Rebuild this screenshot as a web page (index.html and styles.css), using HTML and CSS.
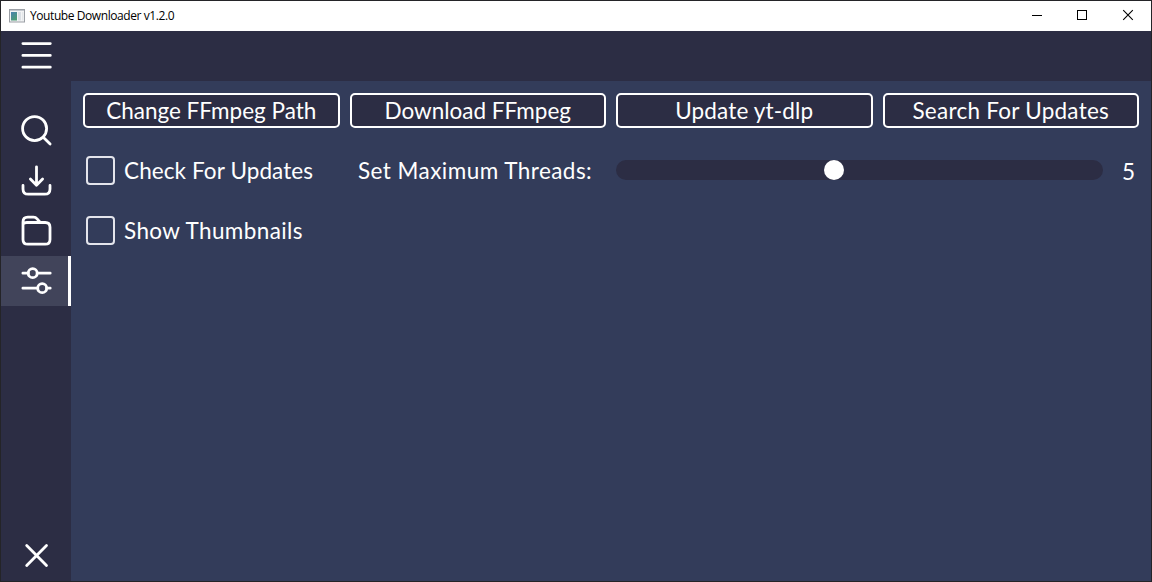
FILE: index.html
```html
<!DOCTYPE html>
<html lang="en">
<head>
<meta charset="utf-8">
<title>Youtube Downloader v1.2.0</title>
<link rel="stylesheet" href="styles.css">
</head>
<body>
<div class="window">
  <header class="titlebar">
    <svg class="app-icon" width="16" height="14" viewBox="0 0 16 14">
      <defs><linearGradient id="g" x1="0" y1="0" x2="0.6" y2="1"><stop offset="0" stop-color="#4a82b0"/><stop offset="1" stop-color="#4d9c74"/></linearGradient></defs>
      <rect x="0.5" y="0.5" width="15" height="12.5" fill="#f3f4f5" stroke="#9b9fa5"/>
      <path d="M1 1.5h14" stroke="#c3c8ce"/>
      <rect x="2" y="3" width="6" height="8.5" fill="url(#g)"/>
      <rect x="9" y="3" width="3" height="8.5" fill="#dadfe4"/>
      <rect x="13" y="3" width="1.5" height="8.5" fill="#e4e7ea"/>
    </svg>
    <span class="title">Youtube Downloader v1.2.0</span>
    <div class="controls">
      <svg width="46" height="30" viewBox="0 0 46 30"><path d="M19 14.5h10" stroke="#000"/></svg>
      <svg width="46" height="30" viewBox="0 0 46 30"><rect x="18.5" y="9.5" width="9" height="9" fill="none" stroke="#000"/></svg>
      <svg width="46" height="30" viewBox="0 0 46 30"><path d="M18.2 9.2l9.6 9.6M27.8 9.2l-9.6 9.6" stroke="#000" stroke-width="1.1"/></svg>
    </div>
  </header>
  <div class="body">
    <nav class="sidebar">
      <div class="item"><svg class="icon" viewBox="0 0 70 50"><path d="M21.9 12.6h27.4M21.9 24.4h27.4M21.9 36.2h27.4"/></svg></div>
      <div class="item search"><svg class="icon" viewBox="0 0 70 50"><circle cx="33.6" cy="22.6" r="12"/><path d="M42.5 31.5l6.6 6.5"/></svg></div>
      <div class="item"><svg class="icon" viewBox="0 0 70 50"><path d="M35.5 10.8v18M29.4 23l6.1 6.2 6.1-6.2M22 29.5v3.4q0 5.3 5.3 5.3h16.4q5.3 0 5.3-5.3v-3.4"/></svg></div>
      <div class="item"><svg class="icon" viewBox="0 0 70 50"><path d="M22 17.5v-1.5q0-4.8 4.8-4.8h5.7q2.2 0 3.6 1.6l2.2 2.6q.8 1.1 2.4 1.1h3.5q4.8 0 4.8 4.8v12.1q0 4.8-4.8 4.8h-17.4q-4.8 0-4.8-4.8zM22.2 17.8q1-1.3 3.6-1.3h14"/></svg></div>
      <div class="item active"><svg class="icon" viewBox="0 0 70 50"><path d="M21.9 17.2h5.4M36.2 17.2h13M21.9 32.2h14.9M45.7 32.2h3.5"/><circle cx="31.7" cy="17.2" r="4.5"/><circle cx="41.2" cy="32.2" r="4.5"/></svg></div>
      <div class="item close"><svg class="icon" viewBox="0 0 70 50"><path d="M25.7 14.4l19.8 20M45.5 14.4l-19.8 20"/></svg></div>
    </nav>
    <div class="right">
      <div class="topbar"></div>
      <main class="content">
        <div class="buttons">
          <button class="btn"><span class="t-change">Change FFmpeg Path</span></button>
          <button class="btn"><span class="t-download">Download FFmpeg</span></button>
          <button class="btn"><span class="t-update">Update yt-dlp</span></button>
          <button class="btn"><span class="t-search">Search For Updates</span></button>
        </div>
        <div class="row">
          <span class="box"></span><span class="check-label t-check">Check For Updates</span>
          <span class="threads t-threads">Set Maximum Threads:</span>
          <div class="slider"><span class="thumb"></span></div>
          <span class="value">5</span>
        </div>
        <div class="row second">
          <span class="box"></span><span class="check-label t-show">Show Thumbnails</span>
        </div>
      </main>
    </div>
  </div>
</div>
</body>
</html>
```
FILE: styles.css
```css
* { box-sizing: border-box; }
body { margin: 0; overflow: hidden; }
.window {
  width: 1152px; height: 582px;
  border: 1px solid #242428;
  display: flex; flex-direction: column;
  font-family: Lato, "Open Sans", sans-serif;
  font-size: 22.5px; color: #fff;
}
.titlebar {
  height: 30px; background: #fff; color: #000;
  display: flex; align-items: center; padding-left: 8px; flex: none;
}
.app-icon { margin-bottom: 1px; }
.title {
  font: 12px/16px "Open Sans", sans-serif;
  letter-spacing: -0.42px; margin-left: 5px; white-space: nowrap;
}
.controls { display: flex; margin-left: auto; }
.body { display: flex; flex: 1; min-height: 0; }
.sidebar {
  width: 70px; background: #2c2d44;
  display: flex; flex-direction: column;
}
.item { height: 50px; flex: none; }
.search { margin-top: 25px; }
.active { background: #41445a; border-right: 3px solid #fff; }
.close { margin-top: auto; }
.icon {
  display: block; width: 70px; height: 50px;
  fill: none; stroke: #fff; stroke-width: 2.8;
  stroke-linecap: round; stroke-linejoin: round;
}
.right { flex: 1; display: flex; flex-direction: column; }
.topbar { height: 50px; background: #2c2d44; }
.content { flex: 1; background: #333c5a; padding: 12px; }
.buttons { display: grid; grid-template-columns: repeat(4, 1fr); gap: 10px; }
.btn {
  height: 35px; padding: 0;
  border: 2px solid #fff; border-radius: 5px;
  background: #2c2d44; color: inherit; font: inherit;
  white-space: nowrap;
}
.row {
  display: flex; align-items: center; height: 30px;
  margin-top: 27px; padding-left: 3px; white-space: nowrap;
}
.second { margin-top: 30px; }
.box {
  width: 29px; height: 29px; margin-top: 1px; flex: none;
  border: 2px solid #e4e5ec; border-radius: 4px;
}
.check-label { margin-left: 9px; width: 234px; flex: none; }
.threads { width: 258px; flex: none; }
.slider {
  width: 487px; height: 20px; border-radius: 10px;
  background: #2c2d44; padding-left: 208px; flex: none;
}
.thumb { display: block; width: 20px; height: 20px; border-radius: 50%; background: #fff; }
.value { margin: 2px 0 0 19px; }
.t-update { letter-spacing: 0.15px; }
.t-search { letter-spacing: 0.25px; }
.t-check { letter-spacing: 0.1px; }
.t-threads { letter-spacing: 0.45px; }
.t-show { letter-spacing: 0.4px; }
```
